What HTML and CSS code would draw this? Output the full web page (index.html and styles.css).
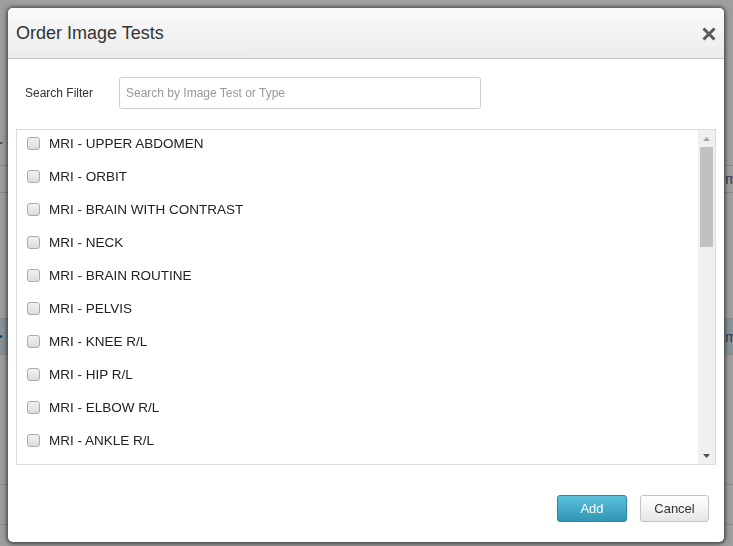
FILE: index.html
```html
<!DOCTYPE html>
<html>
<head>
<meta charset="utf-8">
<link rel="stylesheet" href="styles.css">
</head>
<body>
<div class="page">
  <div class="pg-top"></div>
  <div class="pg-title"><span class="pg-word">r</span></div>
  <div class="pg-row"><span></span><span class="pg-link">m</span></div>
  <div class="pg-gap"></div>
  <div class="pg-row pg-sel"><span class="pg-dot">•</span><span class="pg-link">m</span></div>
  <div class="pg-gap2"></div>
  <div class="pg-row pg-last"></div>
</div>
<div class="backdrop"></div>
<div class="modal">
  <div class="modal-header">
    <h3 class="modal-title">Order Image Tests</h3>
    <span class="close">
      <svg width="14" height="14" viewBox="0 0 14 14"><path d="M1.5 1.5 L12.5 12.5 M12.5 1.5 L1.5 12.5" stroke="#5a5a5a" stroke-width="3" stroke-linecap="butt"/></svg>
    </span>
  </div>
  <div class="modal-body">
    <div class="filter">
      <label class="filter-label">Search Filter</label>
      <input class="filter-input" type="text" placeholder="Search by Image Test or Type">
    </div>
    <div class="list">
      <div class="list-items">
        <div class="item"><span class="cb"></span><span>MRI - UPPER ABDOMEN</span></div>
        <div class="item"><span class="cb"></span><span>MRI - ORBIT</span></div>
        <div class="item"><span class="cb"></span><span>MRI - BRAIN WITH CONTRAST</span></div>
        <div class="item"><span class="cb"></span><span>MRI - NECK</span></div>
        <div class="item"><span class="cb"></span><span>MRI - BRAIN ROUTINE</span></div>
        <div class="item"><span class="cb"></span><span>MRI - PELVIS</span></div>
        <div class="item"><span class="cb"></span><span>MRI - KNEE R/L</span></div>
        <div class="item"><span class="cb"></span><span>MRI - HIP R/L</span></div>
        <div class="item"><span class="cb"></span><span>MRI - ELBOW R/L</span></div>
        <div class="item"><span class="cb"></span><span>MRI - ANKLE R/L</span></div>
      </div>
      <div class="scrollbar">
        <div class="sb-arrow"><svg width="7" height="4" viewBox="0 0 7 4"><path d="M0 4 L3.5 0 L7 4 Z" fill="#a3a3a3"/></svg></div>
        <div class="sb-thumb"></div>
        <div class="sb-track"></div>
        <div class="sb-arrow"><svg width="7" height="4" viewBox="0 0 7 4"><path d="M0 0 L3.5 4 L7 0 Z" fill="#505050"/></svg></div>
      </div>
    </div>
  </div>
  <div class="modal-footer">
    <button class="btn btn-add">Add</button>
    <button class="btn btn-cancel">Cancel</button>
  </div>
</div>
</body>
</html>
```
FILE: styles.css
```css
* { box-sizing: border-box; }
html, body { margin: 0; padding: 0; }
body {
  width: 733px;
  height: 546px;
  overflow: hidden;
  background: #ffffff;
  font-family: "Liberation Sans", Arial, sans-serif;
  color: #333;
}

/* background page (under the overlay) */
.page { width: 733px; }
.pg-top { height: 128px; }
.pg-title { height: 38px; display: flex; align-items: center; border-bottom: 1px solid #ddd; }
.pg-word { font-size: 20px; color: #1f5f96; margin-left: -4px; }
.pg-row { height: 27px; display: flex; justify-content: space-between; align-items: center; border-bottom: 1px solid #ddd; font-size: 14px; }
.pg-link { color: #2a6496; margin-right: -4px; }
.pg-gap { height: 126px; border-bottom: 1px solid #ddd; }
.pg-sel { height: 36px; background: #d9edf7; }
.pg-dot { color: #2a6496; font-size: 10px; margin-left: -1px; }
.pg-gap2 { height: 130px; border-bottom: 1px solid #ddd; }
.pg-last { height: 40px; }

.backdrop {
  position: fixed;
  inset: 0;
  background: rgba(0, 0, 0, 0.38);
}

/* modal */
.modal {
  position: fixed;
  left: 8px;
  top: 8px;
  width: 716px;
  height: 534px;
  background: #fff;
  border-radius: 5px;
  box-shadow: 0 0 3px 2px rgba(0,0,0,0.35), 0 2px 8px rgba(0,0,0,0.3);
  display: flex;
  flex-direction: column;
  overflow: hidden;
}
.modal-header {
  height: 51px;
  flex: none;
  display: flex;
  align-items: center;
  justify-content: space-between;
  padding: 0 8px 0 8px;
  background: linear-gradient(#fbfbfb, #ebebeb);
  border-bottom: 1px solid #c9c9c9;
}
.modal-title {
  margin: 0;
  font-size: 18px;
  font-weight: normal;
  color: #333;
  padding-top: 1px;
}
.close { display: flex; margin-right: 0; padding-top: 1px; }

.modal-body { flex: 1; padding: 18px 7px 0 8px; }
.filter { display: flex; align-items: center; height: 32px; }
.filter-label { width: 103px; padding-left: 9px; font-size: 12px; color: #333; }
.filter-input {
  width: 362px;
  height: 32px;
  border: 1px solid #cccccc;
  border-radius: 3px;
  padding: 0 6px;
  font-family: "Liberation Sans", Arial, sans-serif;
  font-size: 12px;
  color: #555;
  outline: none;
}
.filter-input::placeholder { color: #999; }

.list {
  margin-top: 20px;
  width: 700px;
  height: 336px;
  border: 1px solid #dddddd;
  display: flex;
}
.list-items { flex: 1; padding-left: 10px; }
.item {
  height: 33px;
  display: flex;
  align-items: flex-start;
  padding-top: 6px;
  line-height: 16px;
  font-size: 13.5px;
  color: #222;
}
.cb {
  width: 13px;
  height: 13px;
  margin-top: 1px;
  margin-right: 9px;
  border: 1px solid #ababab;
  border-radius: 3px;
  background: linear-gradient(#f2f2f2, #dcdcdc);
}

.scrollbar {
  width: 17px;
  display: flex;
  flex-direction: column;
  background: #f0f0f0;
  margin-right: 0;
}
.sb-arrow { height: 17px; display: flex; align-items: center; justify-content: center; }
.sb-thumb { height: 100px; margin: 0 2px; background: #c1c1c1; }
.sb-track { flex: 1; }

.modal-footer {
  flex: none;
  display: flex;
  justify-content: flex-end;
  gap: 13px;
  padding: 0 15px 20px 0;
}
.btn {
  height: 27px;
  border-radius: 3px;
  font-family: "Liberation Sans", Arial, sans-serif;
  font-size: 13px;
  padding: 0;
  cursor: pointer;
}
.btn-add {
  width: 70px;
  color: #fff;
  background: linear-gradient(#5bc0de, #2f96b4);
  border: 1px solid #2a86a1;
}
.btn-cancel {
  width: 69px;
  color: #333;
  background: linear-gradient(#ffffff, #e6e6e6);
  border: 1px solid #c4c4c4;
}
```
